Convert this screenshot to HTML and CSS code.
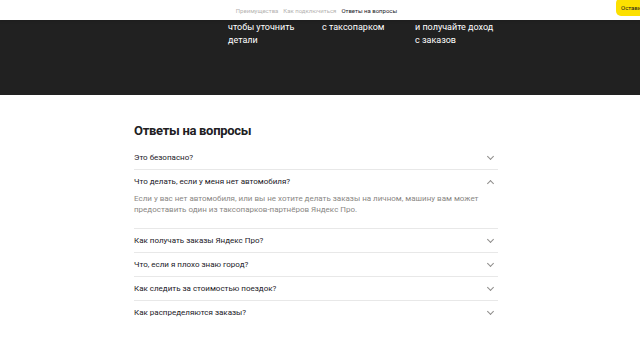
FILE: index.html
```html
<!DOCTYPE html>
<html lang="ru">
<head>
  <meta charset="UTF-8" />
  <meta name="viewport" content="width=device-width, initial-scale=1.0"/>
  <title>Яндекс Про — Ответы на вопросы</title>
  <link rel="stylesheet" href="styles.css">
</head>
<body>
  <header class="topbar">
    <nav class="topnav">
      <a href="#">Преимущества</a>
      <a href="#">Как подключиться</a>
      <a href="#" class="active">Ответы на вопросы</a>
    </nav>
    <a href="#" class="apply-button">Оставить заявку</a>
  </header>

  <section class="steps">
    <div class="steps-row">
      <p>чтобы уточнить<br>детали</p>
      <p>с таксопарком</p>
      <p>и получайте доход<br>с заказов</p>
    </div>
  </section>

  <section class="faq">
    <h2>Ответы на вопросы</h2>
    <div class="faq-item">
      <div class="faq-question">Это безопасно?<span class="chevron"></span></div>
    </div>
    <div class="faq-item open">
      <div class="faq-question">Что делать, если у меня нет автомобиля?<span class="chevron"></span></div>
      <div class="faq-answer">Если у вас нет автомобиля, или вы не хотите делать заказы на личном, машину вам может предоставить один из таксопарков-партнёров Яндекс Про.</div>
    </div>
    <div class="faq-item">
      <div class="faq-question">Как получать заказы Яндекс Про?<span class="chevron"></span></div>
    </div>
    <div class="faq-item">
      <div class="faq-question">Что, если я плохо знаю город?<span class="chevron"></span></div>
    </div>
    <div class="faq-item">
      <div class="faq-question">Как следить за стоимостью поездок?<span class="chevron"></span></div>
    </div>
    <div class="faq-item last">
      <div class="faq-question">Как распределяются заказы?<span class="chevron"></span></div>
    </div>
  </section>
</body>
</html>
```

FILE: styles.css
```css
:root {
  --dark-bg: #212121;
  --text: #21201f;
  --muted: #8a8784;
  --line: #e8e8e8;
  --yellow: #fce000;
}

* {
  box-sizing: border-box;
}

html {
  overflow-x: hidden;
}

body {
  margin: 0;
  font-family: Roboto, "Noto Sans", sans-serif;
  background-color: #fff;
  color: var(--text);
}

.topbar {
  height: 20px;
  display: flex;
  justify-content: center;
  align-items: center;
  position: relative;
  background: #fff;
  overflow: hidden;
  box-shadow: 0 1px 3px rgba(0,0,0,0.15);
}

.topnav {
  display: flex;
  gap: 5px;
  font-size: 6px;
  margin-right: 7px;
}

.topnav a {
  color: #b5b3b1;
  text-decoration: none;
}

.topnav a.active {
  color: var(--text);
}

.apply-button {
  position: absolute;
  left: 616px;
  top: -2px;
  height: 18px;
  padding: 0 5px;
  display: flex;
  align-items: center;
  background: var(--yellow);
  border-radius: 5px;
  color: var(--text);
  font-size: 6px;
  text-decoration: none;
  white-space: nowrap;
}

.steps {
  height: 75px;
  background: var(--dark-bg);
}

.steps-row {
  display: flex;
  padding-left: 228px;
  padding-top: 1px;
}

.steps-row p {
  margin: 0;
  width: 94px;
  color: #fff;
  font-size: 9px;
  line-height: 13px;
}

.steps-row p:nth-child(2) {
  width: 93px;
}

.faq {
  width: 372px;
  padding-right: 8px;
  margin: 0 auto;
  padding-top: 27px;
}

.faq h2 {
  margin: 0 0 6px;
  font-size: 13px;
  font-weight: 700;
  letter-spacing: -0.3px;
  line-height: 18px;
}

.faq-item {
  border-bottom: 1px solid var(--line);
}

.faq-item.last {
  border-bottom: none;
}

.faq-question {
  height: 23px;
  display: flex;
  align-items: center;
  justify-content: space-between;
  font-size: 8px;
}

.chevron {
  width: 5px;
  height: 5px;
  margin-right: 5px;
  margin-top: -3px;
  border-right: 1px solid #8f8d8b;
  border-bottom: 1px solid #8f8d8b;
  transform: rotate(45deg);
}

.open .chevron {
  margin-top: 3px;
  transform: rotate(225deg);
}

.faq-answer {
  padding: 0 0 13px;
  font-size: 8px;
  line-height: 11px;
  color: var(--muted);
}
```
